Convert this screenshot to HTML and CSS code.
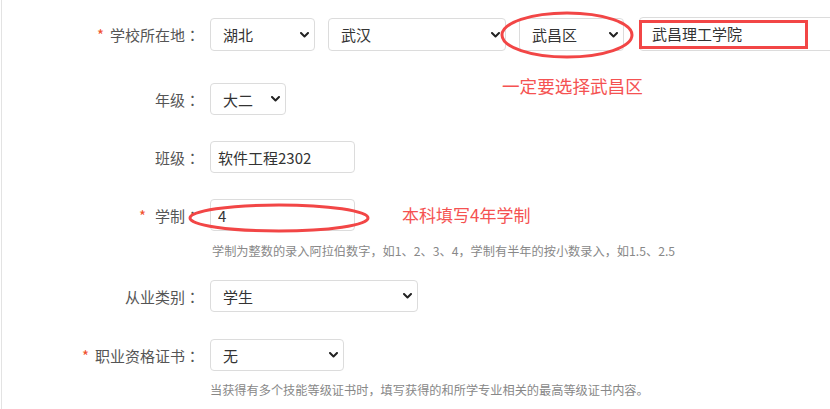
FILE: index.html
```html
<!DOCTYPE html>
<html>
<head>
  <title>学籍信息</title>
  <link rel="stylesheet" href="styles.css">
</head>
<body>
  <div class="page">
    <div class="row row-school">
      <label class="label"><span class="req">*</span>学校所在地<span class="colon">：</span></label>
      <div class="controls">
        <span class="select w-prov">
          <select><option>湖北</option></select>
          <svg class="chev" width="9" height="6" viewBox="0 0 9 6"><polyline points="1,1 4.5,4.5 8,1"/></svg>
        </span>
        <span class="select w-city">
          <select><option>武汉</option></select>
          <svg class="chev" width="9" height="6" viewBox="0 0 9 6"><polyline points="1,1 4.5,4.5 8,1"/></svg>
        </span>
        <span class="select w-district">
          <select><option>武昌区</option></select>
          <svg class="chev" width="9" height="6" viewBox="0 0 9 6"><polyline points="1,1 4.5,4.5 8,1"/></svg>
        </span>
        <input class="text w-school" type="text" value="武昌理工学院">
      </div>
    </div>

    <div class="row row-grade">
      <label class="label">年级<span class="colon">：</span></label>
      <div class="controls">
        <span class="select w-grade">
          <select><option>大二</option></select>
          <svg class="chev" width="9" height="6" viewBox="0 0 9 6"><polyline points="1,1 4.5,4.5 8,1"/></svg>
        </span>
      </div>
    </div>

    <div class="row row-class">
      <label class="label">班级<span class="colon">：</span></label>
      <div class="controls">
        <input class="text w-short" type="text" value="软件工程2302">
      </div>
    </div>

    <div class="row row-years">
      <label class="label"><span class="req req-wide">*</span>学制<span class="colon">：</span></label>
      <div class="controls">
        <input class="text w-short" type="text" value="4">
      </div>
    </div>
    <p class="help help-years">学制为整数的录入阿拉伯数字，如1、2、3、4，学制有半年的按小数录入，如1.5、2.5</p>

    <div class="row row-job">
      <label class="label">从业类别<span class="colon">：</span></label>
      <div class="controls">
        <span class="select w-job">
          <select><option>学生</option></select>
          <svg class="chev" width="9" height="6" viewBox="0 0 9 6"><polyline points="1,1 4.5,4.5 8,1"/></svg>
        </span>
      </div>
    </div>

    <div class="row row-cert">
      <label class="label"><span class="req">*</span>职业资格证书<span class="colon">：</span></label>
      <div class="controls">
        <span class="select w-cert">
          <select><option>无</option></select>
          <svg class="chev" width="9" height="6" viewBox="0 0 9 6"><polyline points="1,1 4.5,4.5 8,1"/></svg>
        </span>
      </div>
    </div>
    <p class="help help-cert">当获得有多个技能等级证书时，填写获得的和所学专业相关的最高等级证书内容。</p>
  </div>

  <!-- red hand-drawn marks on top of the form -->
  <svg class="marks" width="830" height="409" viewBox="0 0 830 409">
    <ellipse cx="567" cy="35" rx="65" ry="22"/>
    <rect x="640.5" y="21.5" width="166" height="26"/>
    <ellipse cx="279" cy="218" rx="89" ry="13"/>
  </svg>
  <span class="note note-district">一定要选择武昌区</span>
  <span class="note note-years">本科填写4年学制</span>
</body>
</html>
```

FILE: styles.css
```css
body {
  margin: 0;
  background: #ffffff;
  font-family: "Noto Sans CJK SC", "Liberation Sans", sans-serif;
  position: relative;
  width: 830px;
  height: 409px;
  overflow: hidden;
}

.page {
  margin-left: 1px;
  border-left: 1px solid #e3e3e3;
  height: 409px;
  padding-top: 18px;
  box-sizing: border-box;
}

.row {
  display: flex;
  align-items: center;
}

.row-grade { margin-top: 32px; }
.row-class { margin-top: 26px; }
.row-years { margin-top: 26px; }
.row-job { margin-top: 20px; }
.row-cert { margin-top: 27px; }

.label {
  width: 198px;
  flex-shrink: 0;
  text-align: right;
  font-size: 15px;
  color: #555;
  white-space: nowrap;
}

/* centred full-width colon, as on the original form */
.colon {
  font-family: "Noto Sans CJK JP", sans-serif;
}

.req {
  color: #f0502c;
  margin-right: 6px;
}

.req-wide {
  margin-right: 9px;
}

.controls {
  display: flex;
  align-items: center;
  gap: 13px;
  margin-left: 10px;
}

.select {
  position: relative;
  display: inline-block;
}

.select select {
  appearance: none;
  -webkit-appearance: none;
  width: 100%;
  height: 33px;
  box-sizing: border-box;
  border: 1px solid #dcdcdc;
  border-radius: 4px;
  background: #fff;
  padding: 0 24px 0 12px;
  font-family: inherit;
  font-size: 15px;
  color: #333;
}

.row-grade .select select,
.row-job .select select,
.row-cert .select select {
  height: 32px;
}

.chev {
  position: absolute;
  right: 6px;
  top: 50%;
  margin-top: -3px;
  fill: none;
  stroke: #222;
  stroke-width: 2;
  stroke-linecap: round;
  stroke-linejoin: round;
}

.w-prov { width: 105px; }
.w-city { width: 178px; }
.w-district { width: 105px; }
.w-grade { width: 76px; }
.w-job { width: 208px; }
.w-cert { width: 134px; }

.text {
  height: 32px;
  box-sizing: border-box;
  border: 1px solid #dcdcdc;
  border-radius: 4px;
  padding: 0 7px;
  font-family: inherit;
  font-size: 15px;
  color: #333;
  background: #fff;
}

.w-short { width: 145px; }

.w-school {
  width: 240px;
  height: 34px;
  margin-left: 2px;
  margin-top: -2px;
  padding: 0 12px;
}

.help {
  margin: 11px 0 0 210px;
  font-size: 12.2px;
  line-height: 18px;
  color: #888;
}

.help-cert {
  margin-top: 10px;
  margin-left: 208px;
}

.marks {
  position: absolute;
  left: 0;
  top: 0;
  fill: none;
  stroke: #f24646;
  stroke-width: 3;
  pointer-events: none;
}

.note {
  position: absolute;
  font-size: 17px;
  line-height: 24px;
  color: #f55252;
  white-space: nowrap;
}

.note-district {
  left: 502px;
  top: 74px;
  font-size: 17.6px;
}

.note-years {
  left: 402px;
  top: 203px;
}
```
